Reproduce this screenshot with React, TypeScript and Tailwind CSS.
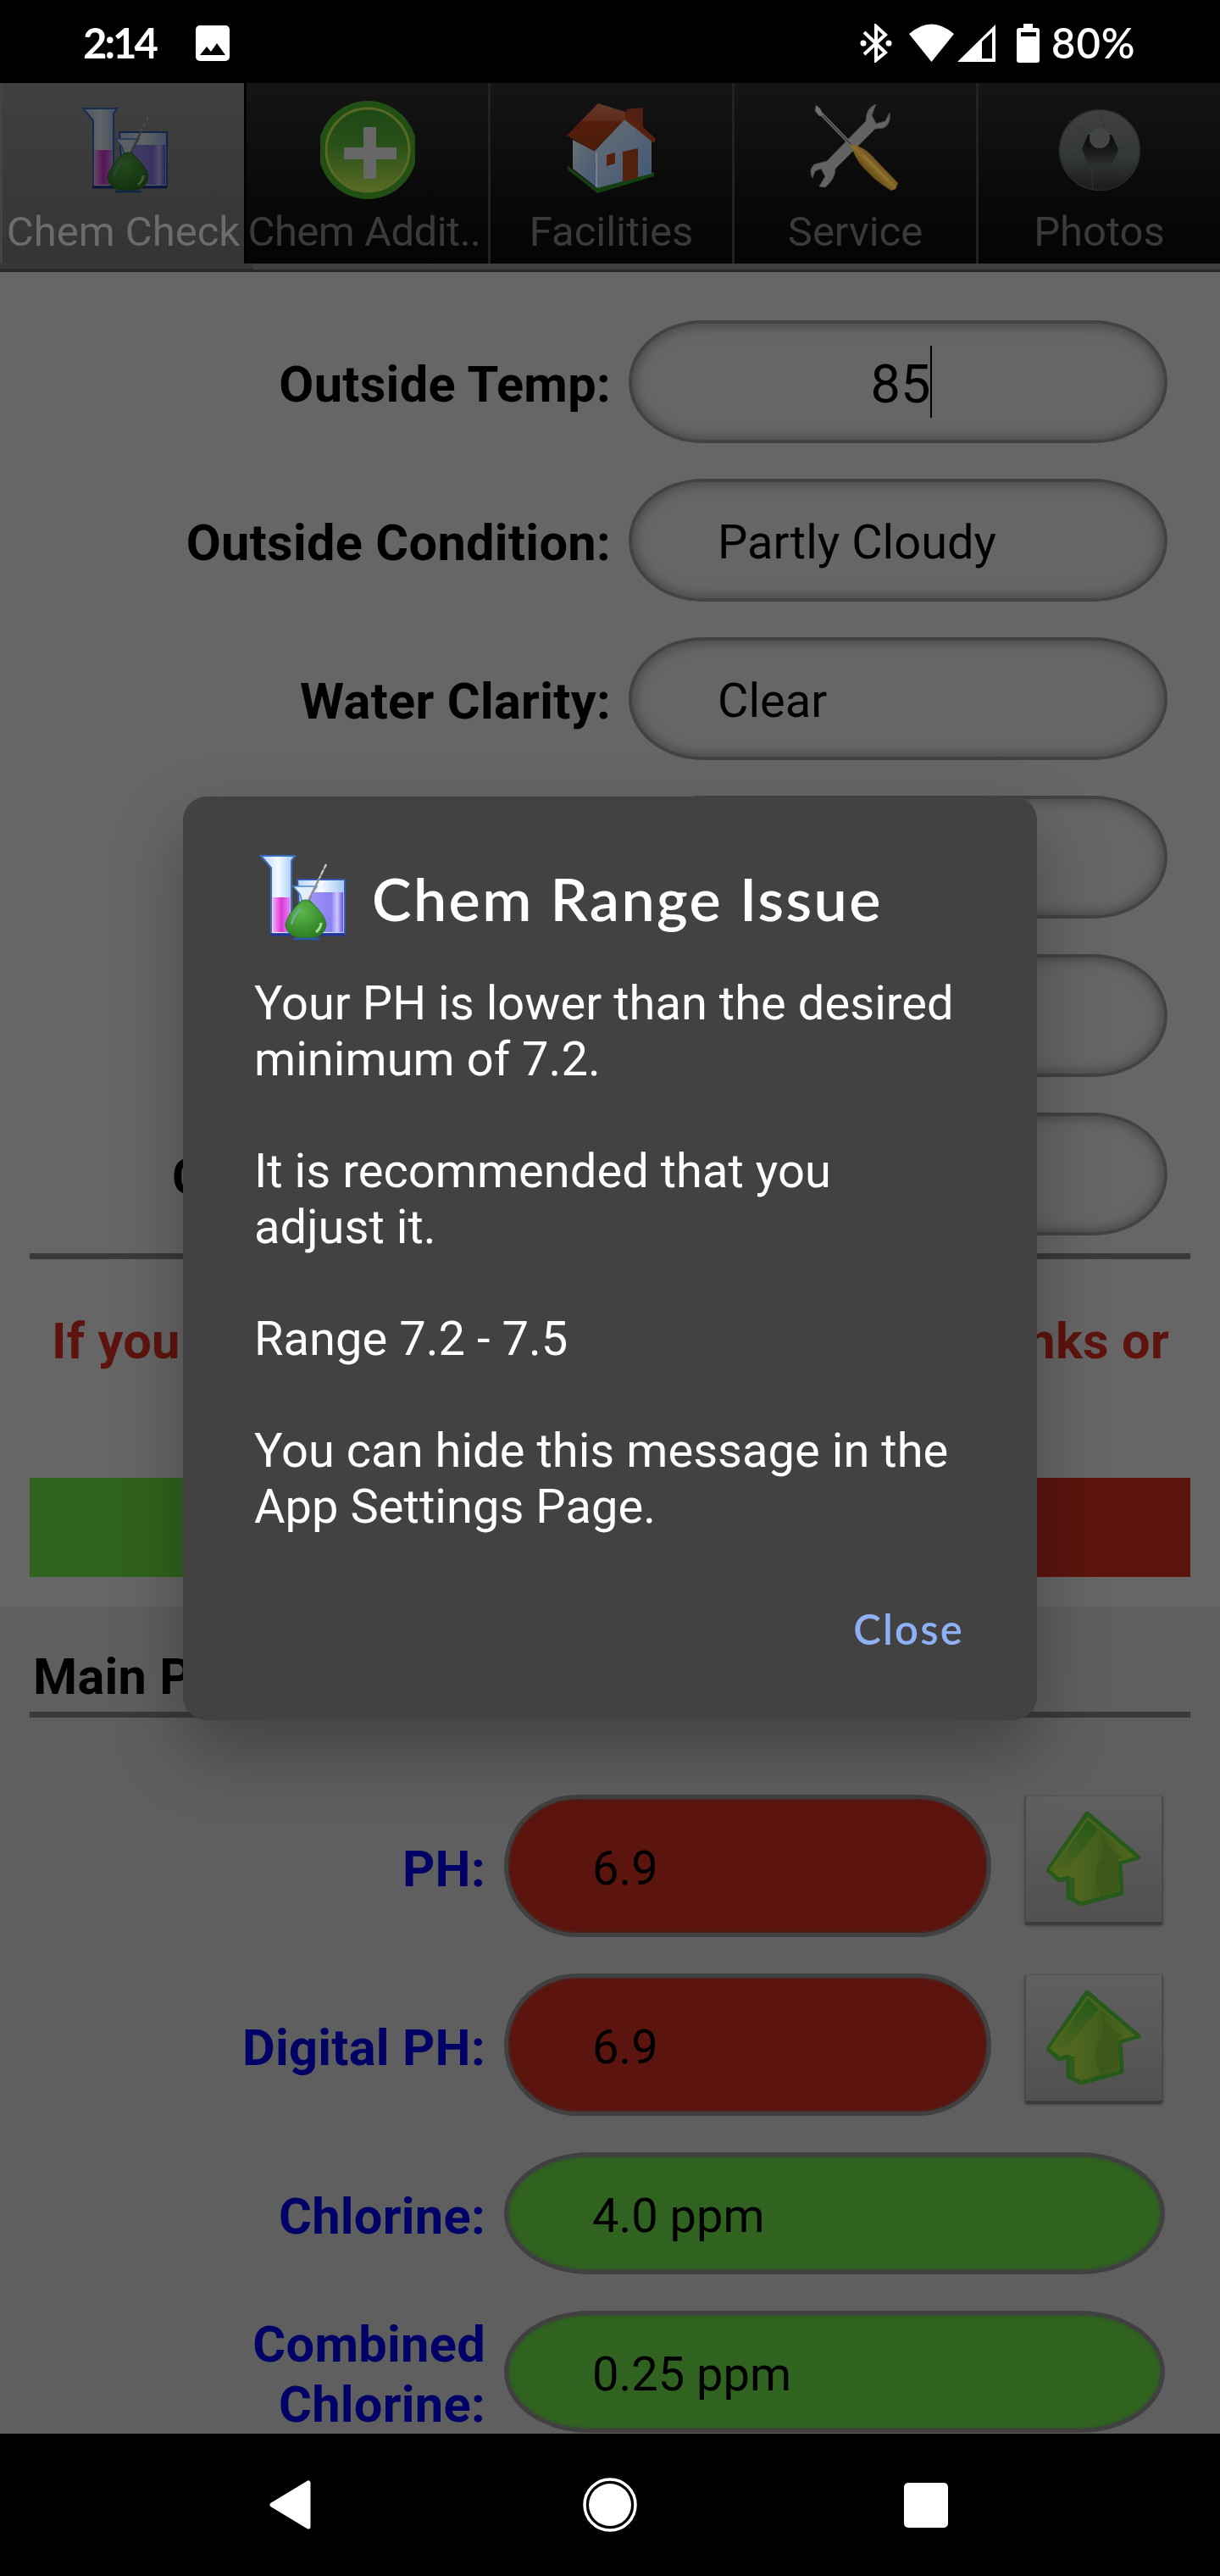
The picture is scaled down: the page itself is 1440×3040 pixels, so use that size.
import { useState } from 'react';
import type { ReactNode } from 'react';
import clsx from 'clsx';

const ChemIcon = ({ id }: { id: string }) => (
  <svg width="112" height="116" viewBox="-3 -2 112 116">
    <defs>
      <linearGradient id={`${id}-glass`} x1="0" x2="1">
        <stop offset="0" stopColor="#b9d4f8" />
        <stop offset="0.5" stopColor="#f4faff" />
        <stop offset="1" stopColor="#9fc4f4" />
      </linearGradient>
      <linearGradient id={`${id}-pink`} x1="0" x2="1">
        <stop offset="0" stopColor="#f7b4f2" />
        <stop offset="0.5" stopColor="#d935d9" />
        <stop offset="1" stopColor="#e58af0" />
      </linearGradient>
      <linearGradient id={`${id}-violet`} x1="0" x2="1">
        <stop offset="0" stopColor="#a99cf5" />
        <stop offset="0.7" stopColor="#8a80f2" />
        <stop offset="0.85" stopColor="#d0c8ff" />
        <stop offset="1" stopColor="#6a50e0" />
      </linearGradient>
      <radialGradient id={`${id}-green`} cx="0.4" cy="0.3" r="0.7">
        <stop offset="0" stopColor="#5cb84a" />
        <stop offset="1" stopColor="#2f7f25" />
      </radialGradient>
    </defs>
    <path d="M48 35H104V99H52Z" fill={`url(#${id}-glass)`} stroke="#3558b0" strokeWidth="2" />
    <path d="M55 50H102V97H55Z" fill={`url(#${id}-violet)`} />
    <path d="M5 7H45L41 13V99H17V21Z" fill={`url(#${id}-glass)`} stroke="#3a6cc4" strokeWidth="2" />
    <path d="M18.500 56H39.500V97H18.500Z" fill={`url(#${id}-pink)`} />
    <path d="M16 100H104" stroke="#24349a" strokeWidth="3" />
    <path d="M43 43H71L65 52L62 62H54L51 52Z" fill="#e3eefa" stroke="#4f86cc" strokeWidth="1.500" />
    <path d="M82 17L60 62" stroke="#8f8f94" strokeWidth="2.500" />
    <path d="M82 17L74 33" stroke="#c8c8c8" strokeWidth="2" strokeDasharray="5 3" />
    <path
      d="M52 61Q58 57 64 61Q82 78 82 89Q80 104 58 104Q36 104 34 89Q35 77 52 61Z"
      fill={`url(#${id}-green)`}
      stroke="#2d6f35"
      strokeWidth="1"
    />
    <path d="M43 105H74" stroke="#2c58a8" strokeWidth="2.500" />
    <path d="M41 88Q44 76 52 69" fill="none" stroke="#72a8a0" strokeWidth="2.500" />
    <path d="M70 97Q76 92 76 86" fill="none" stroke="#a8e090" strokeWidth="3" />
  </svg>
);

const AddIcon = () => (
  <svg width="112" height="116" viewBox="0 0 112 116">
    <defs>
      <linearGradient id="add-fill" x1="0" y1="0" x2="0" y2="1">
        <stop offset="0" stopColor="#1e4815" />
        <stop offset="0.4" stopColor="#264f18" />
        <stop offset="1" stopColor="#586a24" />
      </linearGradient>
    </defs>
    <circle cx="56" cy="58" r="58" fill="#224f14" />
    <circle cx="56" cy="58" r="49" fill="url(#add-fill)" stroke="#586925" strokeWidth="3" />
    <path d="M51 31H66V55H90V69H66V92H51V69H28V55H51Z" fill="#676767" />
  </svg>
);

const HouseIcon = () => (
  <svg width="112" height="116" viewBox="-3 0 112 116">
    <defs>
      <linearGradient id="house-wall" x1="0" y1="0" x2="1" y2="1">
        <stop offset="0" stopColor="#6a6e72" />
        <stop offset="1" stopColor="#3f5877" />
      </linearGradient>
      <linearGradient id="house-roof" x1="0" y1="0" x2="0" y2="1">
        <stop offset="0" stopColor="#65392c" />
        <stop offset="0.35" stopColor="#5f2b1b" />
        <stop offset="0.4" stopColor="#541d0b" />
        <stop offset="1" stopColor="#4d1c0b" />
      </linearGradient>
    </defs>
    <path d="M0 76L35 103L103 84V89L36 109L2 82Z" fill="#153f11" />
    <path d="M7 46L32 59L36 103L7 80Z" fill="url(#house-wall)" />
    <path d="M32 60L70 20L100 47V86L36 103Z" fill="url(#house-wall)" />
    <path d="M35 62V102" stroke="#788088" strokeWidth="2" />
    <path d="M70 10L90 8V38L74 22Z" fill="#522012" />
    <path d="M0 41L37 3L72 14L70 20L32 59Z" fill="url(#house-roof)" />
    <path d="M70 12L105 45L103 50L68 22Z" fill="#58210f" />
    <path d="M66 60L84 56V91L66 95Z" fill="#54200e" />
    <path d="M47 64L57 61V74L47 77Z" fill="#54200e" />
  </svg>
);

const ToolsIcon = () => (
  <svg width="112" height="116" viewBox="0 0 112 116">
    <defs>
      <linearGradient id="handle" x1="0" y1="1" x2="1" y2="0">
        <stop offset="0.35" stopColor="#5a4112" />
        <stop offset="0.5" stopColor="#8a6c2a" />
        <stop offset="0.65" stopColor="#5f4614" />
      </linearGradient>
    </defs>
    <path
      d="M80 4L75 17L80 27L91 24L96 14Q98 27 89 32L79 33L32 80Q32 92 20 102L13 101L20 89L15 80L8 83L5 91Q0 82 7 75L22 71L68 24Q68 8 80 4Z"
      fill="#636363"
      stroke="#474747"
      strokeWidth="1"
    />
    <path d="M9 5L14 9L18 17L13 18L8 12Z" fill="#707070" />
    <path d="M15 15L53 54" stroke="#6d6d6d" strokeWidth="4" />
    <path d="M17 17L53 54" stroke="#353535" strokeWidth="1.500" />
    <path d="M50 51Q66 53 81 71L106 97L103 104L98 106Q80 95 70 84Q56 72 50 51Z" fill="url(#handle)" />
    <path d="M66 65L94 94" stroke="#8f7638" strokeWidth="2.500" />
  </svg>
);

const LensIcon = () => (
  <svg width="112" height="116" viewBox="0 0 112 116">
    <defs>
      <linearGradient id="lens-body" x1="0" y1="0" x2="0" y2="1">
        <stop offset="0" stopColor="#3f4241" />
        <stop offset="0.6" stopColor="#343737" />
        <stop offset="1" stopColor="#191b1b" />
      </linearGradient>
      <linearGradient id="lens-hole" x1="0" y1="0" x2="0" y2="1">
        <stop offset="0.3" stopColor="#111212" />
        <stop offset="1" stopColor="#2e3030" />
      </linearGradient>
    </defs>
    <circle cx="56" cy="58" r="47.500" fill="url(#lens-body)" stroke="#292929" strokeWidth="1.500" />
    <path d="M56 11L64 38M102 46L78 58M92 90L72 76M48 104L46 78M11 72L35 59M20 24L42 40" stroke="#323535" />
    <path d="M42 40L70 40L78 57L70 77H43L35 57Z" fill="url(#lens-hole)" />
    <circle cx="56" cy="44" r="12" fill="#444646" />
  </svg>
);

const ArrowUpIcon = () => (
  <svg width="112" height="112" viewBox="0 0 112 112">
    <defs>
      <linearGradient id="arrow-fill" x1="0" x2="1">
        <stop offset="0.3" stopColor="#51661f" />
        <stop offset="0.6" stopColor="#3f5d1b" />
        <stop offset="1" stopColor="#53691f" />
      </linearGradient>
      <linearGradient id="arrow-shade" x1="0.7" y1="0" x2="0.2" y2="1">
        <stop offset="0" stopColor="#265a19" />
        <stop offset="1" stopColor="#4c641f" />
      </linearGradient>
    </defs>
    <path
      d="M48 2L109 54L87 60L89 96L41 109L26 101V78L15 81L2 69Z"
      fill="url(#arrow-fill)"
      stroke="#27591a"
      strokeWidth="5"
      strokeLinejoin="round"
    />
    <path d="M49 9L61 22L25 67L8 68Z" fill="url(#arrow-shade)" />
    <path d="M64 27Q72 50 61 62Q54 80 64 99L85 93V56L91 54Q72 42 64 27Z" fill="#375319" opacity="0.55" />
    <path d="M49 8L5 68L15 76" fill="none" stroke="#4d661e" strokeWidth="2" />
    <path d="M50 8L103 53L84 58" fill="none" stroke="#4d661e" strokeWidth="2" />
    <path d="M31 78V101" stroke="#2f5b1b" strokeWidth="5" />
  </svg>
);

const StatusBar = () => (
  <header className="flex h-[98px] items-center bg-black pr-[98px] pl-[98px] pt-1 text-[49px] font-medium text-white">
    <span className="w-[90px] font-['Lato'] font-bold tracking-[-3px] whitespace-nowrap">2:14</span>
    <svg className="ml-[43px]" width="40" height="42" viewBox="0 0 40 42">
      <rect width="40" height="42" rx="5" fill="#fff" />
      <path d="M5 35L13 25L18 31L25 21L35 35Z" fill="#000" />
    </svg>
    <div className="ml-auto flex items-center">
      <svg width="38" height="46" viewBox="0 0 38 46">
        <path d="M5 10L30 34L19 43V3L30 13L5 36" fill="none" stroke="#fff" strokeWidth="4" />
        <circle cx="4" cy="23" r="3.500" fill="#fff" />
        <circle cx="34" cy="23" r="3.500" fill="#fff" />
      </svg>
      <svg className="ml-5" width="53" height="46" viewBox="0 0 53 46">
        <path d="M0 12Q26.500 -11 53 12L26.500 45Z" fill="#fff" />
      </svg>
      <svg className="ml-1" width="45" height="46" viewBox="0 0 45 46">
        <path d="M0 45L45 1V45ZM29 21V41H41V10Z" fill="#fff" fillRule="evenodd" />
      </svg>
      <svg className="ml-[25px]" width="27" height="46" viewBox="0 0 27 46">
        <path d="M8 0H19V5H24Q27 5 27 8V43Q27 46 24 46H3Q0 46 0 43V8Q0 5 3 5H8ZM5 10V15H23V10Z" fill="#fff" fillRule="evenodd" />
      </svg>
      <span className="ml-[14px] w-[101px] font-['Lato'] font-semibold tracking-[1px] whitespace-nowrap">80%</span>
    </div>
  </header>
);

const tabs: { label: string; icon: ReactNode }[] = [
  { label: 'Chem Check', icon: <div className="brightness-[0.4]"><ChemIcon id="tab" /></div> },
  { label: 'Chem Addit..', icon: <AddIcon /> },
  { label: 'Facilities', icon: <HouseIcon /> },
  { label: 'Service', icon: <ToolsIcon /> },
  { label: 'Photos', icon: <LensIcon /> },
];

const TabBar = () => {
  const [active, setActive] = useState(0);

  return (
    <nav className="flex h-[223px] flex-col bg-[#666]">
      <div className="grid h-[213px] grid-cols-5 bg-black">
        {tabs.map((tab, index) => (
          <button
            key={tab.label}
            onClick={() => setActive(index)}
            className={clsx(
              'flex flex-col items-center border-l-[3px] pt-[21px] text-[49px] leading-[58px] whitespace-nowrap',
              active === index
                ? 'border-[#444] bg-linear-to-b from-[#404040] to-[#343434] text-[#6c6c6c]'
                : 'bg-linear-to-b from-[#151515] to-[#040404] text-[#3a3a3a]',
              active !== index && (index === active + 1 ? 'border-black' : 'border-[#222]')
            )}
          >
            {tab.icon}
            <span className={clsx('mt-[10px]', tab.label.length > 10 && 'mr-[7px] tracking-[-0.5px]')}>{tab.label}</span>
          </button>
        ))}
      </div>
      <div className="flex h-[10px]">
        <div className="w-[299px] border-b-4 border-[#292929] bg-[#383838]" />
        <div className="flex-1 border-b-[3px] border-[#292929] bg-[#3f3f3f]" />
      </div>
    </nav>
  );
};

const fields = [
  { label: 'Outside Temp:', value: '85', focused: true },
  { label: 'Outside Condition:', value: 'Partly Cloudy' },
  { label: 'Water Clarity:', value: 'Clear' },
  { label: '', value: '' },
  { label: '', value: '' },
  { label: 'C', value: '', covered: true },
];

const readings = [
  { label: 'PH:', value: '6.9', low: true },
  { label: 'Digital PH:', value: '6.9', low: true },
  { label: 'Chlorine:', value: '4.0 ppm', low: false },
  { label: 'Combined Chlorine:', value: '0.25 ppm', low: false },
];

const Conditions = () => (
  <section className="h-[1575px] bg-[#666] px-[35px] pt-[57px]">
    <div className="flex flex-col gap-[42px]">
      {fields.map((field, index) => (
        <div key={index} className="flex h-[145px] items-center gap-[21px]">
          <span
            className={clsx(
              'w-[686px] pt-[7px] text-[59.5px] leading-[70px] font-bold tracking-[0.3px] text-black',
              field.covered ? 'pl-[168px]' : 'text-right'
            )}
          >
            {field.label}
          </span>
          <div className="flex h-[145px] w-[636px] items-center rounded-[88px/73px] border-[4px] border-[#434343] shadow-[inset_0_0_13px_3px_#484848]">
            {field.focused ? (
              <div className="flex h-[85px] w-full items-center justify-center pl-2 text-[63px] text-black">
                <span className="h-[85px] border-r-2 border-black pt-[6px] leading-[79px]">{field.value}</span>
              </div>
            ) : (
              <span className="pt-[5px] pl-[101px] text-[56px] leading-[66px] text-black">{field.value}</span>
            )}
          </div>
        </div>
      ))}
    </div>
    <div className="mt-[21px] h-[7px] bg-[#3a3a3a]" />
    <p className="mt-[62px] flex h-[140px] justify-between pr-[25px] pl-[26px] text-[59.5px] leading-[70px] font-bold tracking-[0.3px] text-[#5e140e]">
      <span>If you</span>
      <span>nks or</span>
    </p>
    <div className="mt-[56px] grid h-[117px] grid-cols-2">
      <div className="bg-[#30631c]" />
      <div className="bg-[#5c140e]" />
    </div>
  </section>
);

const MainPool = () => (
  <section className="h-[976px] bg-[#5f5f5f] px-[35px] pt-[48px]">
    <h2 className="pl-[4px] text-[59.5px] leading-[70px] font-bold tracking-[0.3px] text-black">Main P</h2>
    <div className="mt-[6px] h-[7px] bg-[#3a3a3a]" />
    <div className="mt-[91px] flex flex-col gap-[43px]">
      {readings.map((reading) => (
        <div key={reading.label} className={clsx('flex', reading.low ? 'h-[168px]' : 'h-[144px]')}>
          <span className="flex w-[538px] items-center justify-end pt-[8px] pl-[230px] text-right text-[59.5px] leading-[71px] font-bold tracking-[0.3px] text-[#000066]">
            {reading.label}
          </span>
          <div
            className={clsx(
              'ml-[22px] flex items-center border-[5px] border-[#404040] pl-[99px] text-[56px] leading-[66px] text-black',
              reading.low
                ? 'w-[575px] rounded-[86px/84px] bg-[#5c140e] pt-[6px] shadow-[inset_0_0_3px_1px_#4a2c2a]'
                : 'w-[780px] rounded-[100px/72px] bg-[#2f631f] pt-[6px] shadow-[inset_0_0_3px_1px_#3a4a36]'
            )}
          >
            {reading.value}
          </div>
          {reading.low && (
            <button className="mt-px ml-[39px] flex h-[153px] w-[164px] justify-center rounded-[4px] border-x-2 border-t border-b-4 border-x-[#4a4a4a] border-t-[#555] border-b-[#3c3c3c] bg-linear-to-b from-[#606060] to-[#505050] pt-[18px] shadow-[0_1px_3px_#444]">
              <ArrowUpIcon />
            </button>
          )}
        </div>
      ))}
    </div>
  </section>
);

const AlertDialog = () => (
  <div className="absolute top-[940px] left-[216px] h-[1090px] w-[1008px] rounded-[28px] bg-[#424242] px-[84px] pt-[61px] text-white shadow-[0_38px_84px_rgba(0,0,0,0.3)]">
    <div className="flex items-center">
      <ChemIcon id="dialog" />
      <h1 className="ml-[27px] pt-[3px] font-['Lato'] text-[70px] font-semibold tracking-[2.4px] whitespace-nowrap">Chem Range Issue</h1>
    </div>
    <div className="mt-[34px] text-[56px] leading-[66px] tracking-[0.05px] whitespace-pre-line">
      {`Your PH is lower than the desired
      minimum of 7.2.

      It is recommended that you
      adjust it.

      Range 7.2 - 7.5

      You can hide this message in the
      App Settings Page.`}
    </div>
    <div className="mt-[81px] flex justify-end pr-[2px]">
      <button className="font-['Lato'] text-[49px] leading-[60px] font-semibold tracking-[2.2px] text-[#8fb0f5]">Close</button>
    </div>
  </div>
);

const NavigationBar = () => (
  <footer className="flex h-[168px] items-center bg-black pl-[317px]">
    <svg width="50" height="58" viewBox="0 0 50 58">
      <path d="M47 3V55L4 29Z" fill="#fff" stroke="#fff" strokeWidth="5" strokeLinejoin="round" />
    </svg>
    <svg className="ml-[321px]" width="64" height="64" viewBox="0 0 64 64">
      <circle cx="32" cy="32" r="30" fill="none" stroke="#fff" strokeWidth="3.500" />
      <circle cx="32" cy="32" r="25" fill="#fff" />
    </svg>
    <div className="ml-[315px] h-[53px] w-[52px] rounded-[5px] bg-white" />
  </footer>
);

const App = () => {
  return (
    <div className="relative flex h-[3040px] w-[1440px] flex-col overflow-hidden bg-black font-['Roboto',sans-serif]">
      <StatusBar />
      <TabBar />
      <Conditions />
      <MainPool />
      <NavigationBar />
      <AlertDialog />
    </div>
  );
};

export default App;
